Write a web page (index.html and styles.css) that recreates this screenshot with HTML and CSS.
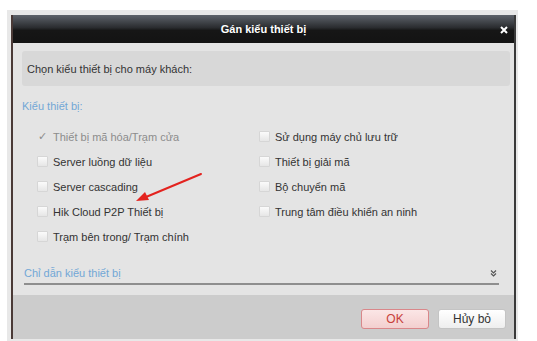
FILE: index.html
```html
<!DOCTYPE html>
<html lang="vi">
<head>
    <meta charset="UTF-8">
    <title>Gán kiểu thiết bị</title>
    <link rel="stylesheet" href="styles.css">
</head>
<body>
    <div class="frame">
        <div class="dialog">
            <div class="titlebar">
                <span class="title">Gán kiểu thiết bị</span>
                <svg class="close" width="8" height="8" viewBox="0 0 8 8">
                    <path d="M1 1 L7 7 M7 1 L1 7" stroke="#fff" stroke-width="2"/>
                </svg>
            </div>

            <div class="body">
                <div class="prompt">Chọn kiểu thiết bị cho máy khách:</div>
                <div class="section-label">Kiểu thiết bị:</div>

                <div class="options">
                    <label class="option disabled"><span class="check">&#10003;</span>Thiết bị mã hóa/Trạm cửa</label>
                    <label class="option"><span class="box"></span>Sử dụng máy chủ lưu trữ</label>
                    <label class="option"><span class="box"></span>Server luồng dữ liệu</label>
                    <label class="option"><span class="box"></span>Thiết bị giải mã</label>
                    <label class="option"><span class="box"></span>Server cascading</label>
                    <label class="option"><span class="box"></span>Bộ chuyển mã</label>
                    <label class="option"><span class="box"></span>Hik Cloud P2P Thiết bị</label>
                    <label class="option"><span class="box"></span>Trung tâm điều khiển an ninh</label>
                    <label class="option"><span class="box"></span>Trạm bên trong/ Trạm chính</label>
                </div>

                <div class="guide">
                    <span>Chỉ dẫn kiểu thiết bị</span>
                    <svg class="expand" width="7" height="7" viewBox="0 0 7 7">
                        <path d="M1 0.5 L3.5 3 L6 0.5 M1 3.5 L3.5 6 L6 3.5" fill="none" stroke="#555" stroke-width="1.2"/>
                    </svg>
                </div>
            </div>

            <div class="footer">
                <button type="button" class="btn btn-ok">OK</button>
                <button type="button" class="btn">Hủy bỏ</button>
            </div>
        </div>

        <!-- annotation arrow drawn over the dialog -->
        <svg class="arrow" width="537" height="341" viewBox="0 0 537 341">
            <line x1="201" y1="174" x2="146" y2="197" stroke="#e3231f" stroke-width="2" stroke-linecap="round"/>
            <polygon points="136,201 145,192 149,200" fill="#e3231f"/>
        </svg>
    </div>
</body>
</html>
```

FILE: styles.css
```css
body {
    margin: 0;
    background: #fff;
    font-family: 'Liberation Sans', Arial, sans-serif;
    font-size: 11px;
    color: #333;
}

.frame {
    width: 511px;
    margin: 10px 0 0 7px;
    padding: 5px 3px 2px 4px;
    background: #e8e8e8;
    box-sizing: border-box;
}

.dialog {
    width: 505px;
    box-sizing: border-box;
    border-left: 2px solid #4a3a37;
    border-right: 2px solid #3a3a3a;
    background: #e4e4e4;
}

.titlebar {
    height: 28px;
    display: flex;
    align-items: center;
    justify-content: center;
    position: relative;
    background: linear-gradient(to bottom, #5e636b 0%, #2a2c2f 45%, #161616 55%, #131313 100%);
}

.title {
    color: #fff;
    font-weight: bold;
    font-size: 11px;
}

.close {
    position: absolute;
    right: 6px;
    top: 11px;
}

.body {
    padding: 8px 4px 10px 9px;
}

.prompt {
    height: 35px;
    display: flex;
    align-items: center;
    padding-left: 5px;
    background: #d8d8d8;
    border-radius: 3px;
}

.section-label {
    margin-top: 12px;
    line-height: 16px;
    color: #72a7d6;
}

.options {
    margin-top: 10px;
    padding-left: 15px;
    display: grid;
    grid-template-columns: 222px 1fr;
    grid-auto-rows: 25px;
}

.option {
    display: flex;
    align-items: center;
    gap: 5px;
}

.option.disabled {
    color: #8c8c8c;
}

.box {
    width: 9px;
    height: 9px;
    border: 1px solid #d6d6d6;
    border-radius: 1px;
    background: linear-gradient(to bottom, #fbfbfb, #e6e6e6);
}

.check {
    width: 11px;
    font-size: 11px;
    color: #8c8c8c;
    text-align: center;
}

.guide {
    margin: 16px 11px 0 2px;
    line-height: 16px;
    padding-bottom: 2px;
    border-bottom: 2px solid #8e8e8e;
    color: #72a7d6;
    display: flex;
    align-items: center;
    justify-content: space-between;
}

.expand {
    margin-right: 2px;
}

.footer {
    height: 44px;
    background: #cccccc;
    display: flex;
    justify-content: flex-end;
    align-items: flex-start;
    gap: 9px;
    padding: 14px 8px 0 0;
    box-sizing: border-box;
}

.btn {
    width: 68px;
    height: 20px;
    font-family: 'Liberation Sans', Arial, sans-serif;
    font-size: 12px;
    color: #333;
    border: 1px solid #c4c4c4;
    border-radius: 3px;
    background: linear-gradient(to bottom, #ffffff, #eeeeee);
    padding: 0;
}

.btn-ok {
    color: #c8403b;
    border-color: #d9878a;
    background: linear-gradient(to bottom, #fbe6e6, #f3cfcf);
}

.arrow {
    position: absolute;
    left: 0;
    top: 0;
    pointer-events: none;
}
```
